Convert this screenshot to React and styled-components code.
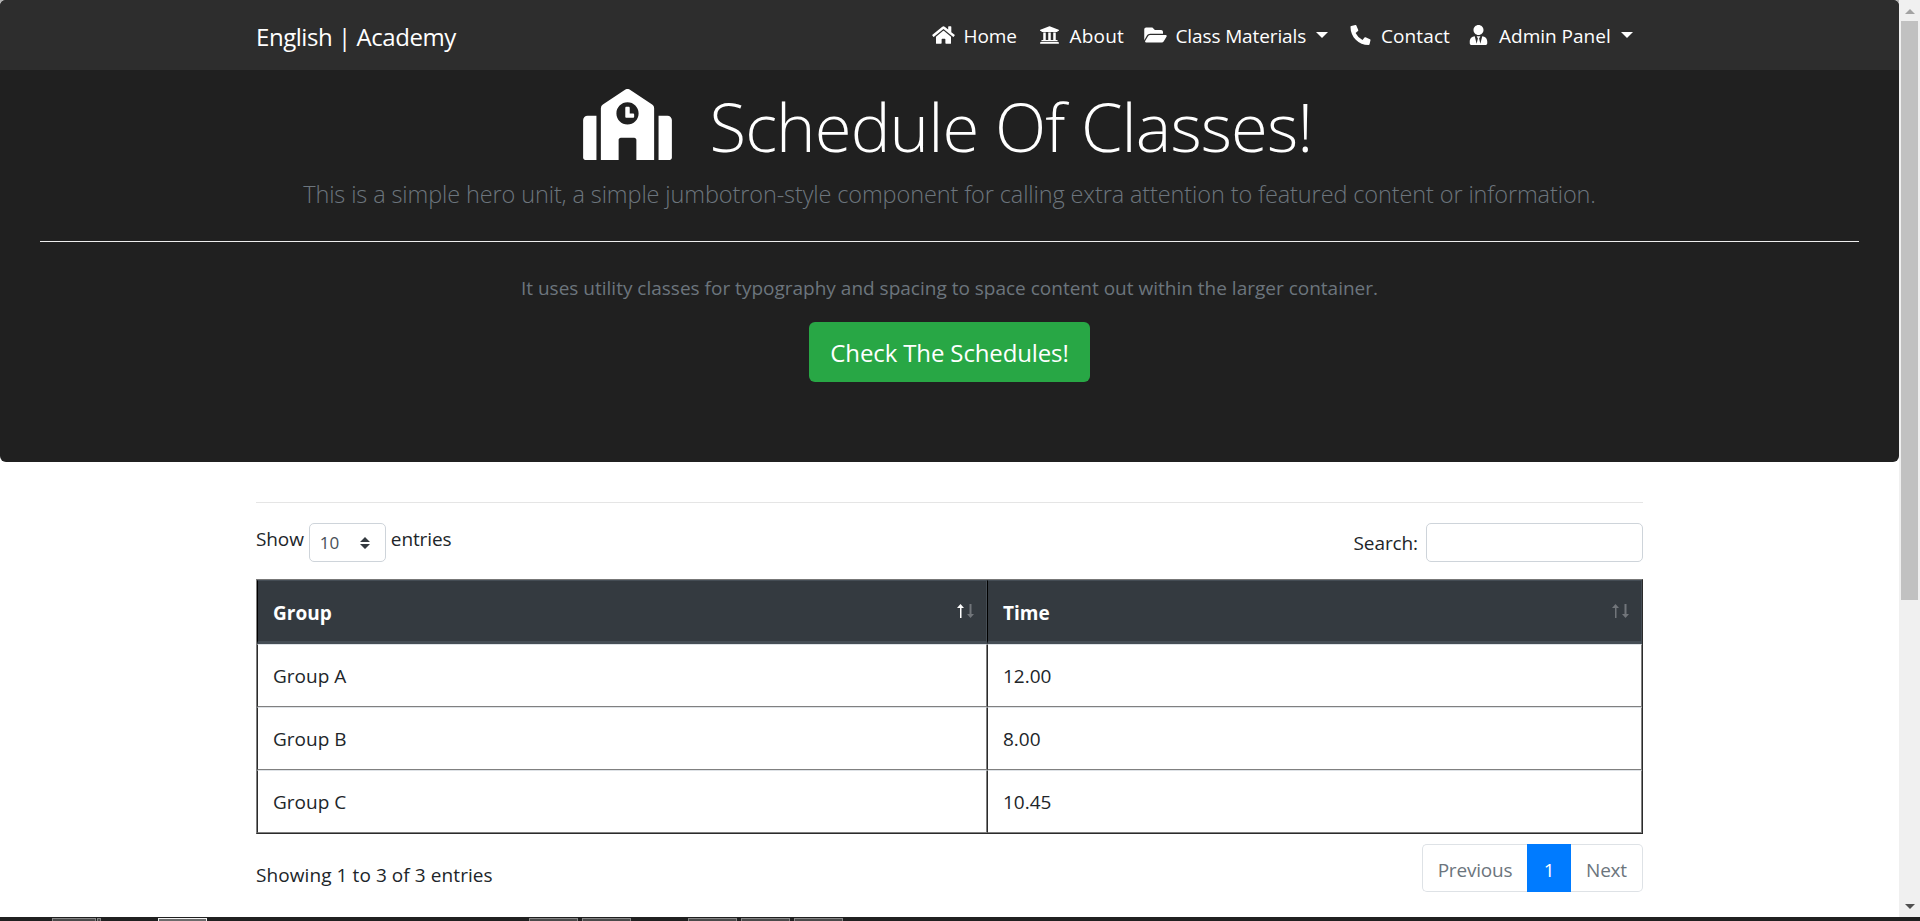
import React from 'react';
import styled, { createGlobalStyle } from 'styled-components';
import {
  FaHome,
  FaUniversity,
  FaFolderOpen,
  FaPhoneAlt,
  FaUserTie,
  FaSchool,
} from 'react-icons/fa';

const GlobalStyle = createGlobalStyle`
  *, *::before, *::after { box-sizing: border-box; }
  body {
    margin: 0;
    overflow: hidden;
    background: #fff;
    color: #212529;
    font-family: "Segoe UI", "Open Sans", "Noto Sans", sans-serif;
    font-size: 19px;
    line-height: 30px;
  }
  h1, p, ul { margin: 0; padding: 0; }
`;

const Screen = styled.div`
  display: grid;
  grid-template: 917px 4px / 1fr 21px;
  height: 921px;
`;

const Page = styled.div`
  background: linear-gradient(#b4b4b4 0 70px, #fff 70px);
`;

const Container = styled.div`
  width: 1387px;
  margin-left: 256px;
`;

/* Header */

const Jumbotron = styled.header`
  height: 462px;
  border-radius: 6px;
  overflow: hidden;
  background: #202020;
`;

const Navbar = styled.nav`
  height: 70px;
  background: #2d2d2d;
`;

const NavInner = styled(Container)`
  display: flex;
  align-items: center;
  justify-content: space-between;
  height: 70px;
`;

const Brand = styled.a`
  padding-top: 3px;
  color: #fff;
  font-size: 24px;
  letter-spacing: -0.45px;
`;

const NavList = styled.ul`
  display: grid;
  grid-template-columns: 106px 106px 205.5px 118px 177px;
  list-style: none;
`;

const NavLink = styled.a`
  display: flex;
  align-items: center;
  gap: 8px;
  color: #fff;
  letter-spacing: ${(p) => p.$tracking || 0}px;
  white-space: nowrap;

  svg { flex: none; width: 25px; height: 20px; }
  span { padding-top: 1px; }
`;

const Caret = styled.i`
  margin-left: 2px;
  border: 6px solid transparent;
  border-top-color: #fff;
  border-bottom: 0;
`;

const Hero = styled.section`
  display: flex;
  flex-direction: column;
  align-items: center;
  padding: 14px 40px 80px;
`;

const HeroTitle = styled.h1`
  display: flex;
  align-items: center;
  gap: 38px;
  height: 84px;
  color: #fff;
  font-size: 67px;
  font-weight: 300;
  line-height: 84px;
  letter-spacing: -0.9px;
  margin-right: 4px;

  svg { width: 89px; height: 71px; margin-bottom: 4px; }
`;

const Lead = styled.p`
  margin-top: 7px;
  color: #6c757d;
  font-size: 23.5px;
  font-weight: 300;
  line-height: 38px;
  letter-spacing: -0.12px;
`;

const HeroRule = styled.hr`
  width: 100%;
  height: 1px;
  margin: 28px 0 31px;
  border: 0;
  background: #eee;
`;

const HeroNote = styled.p`
  color: #6c757d;
`;

const PrimaryButton = styled.button`
  width: 281px;
  height: 60px;
  margin-top: 19px;
  padding: 2px 0 0;
  border: 0;
  border-radius: 6px;
  background: #28a745;
  color: #fff;
  font: inherit;
  font-size: 24px;
  letter-spacing: -0.13px;
`;

/* Schedule table */

const Rule = styled.hr`
  height: 1px;
  margin: 40px 0 20px;
  border: 0;
  background: #e5e5e5;
`;

const Controls = styled.div`
  display: flex;
  justify-content: space-between;
  height: 39px;
`;

const LengthLabel = styled.label`
  display: flex;
  padding-top: 1px;
  letter-spacing: -0.1px;
`;

const LengthSelect = styled.span`
  display: flex;
  align-items: center;
  justify-content: space-between;
  width: 77px;
  height: 39px;
  margin: -1px 5px 0;
  padding: 0 15px 0 10px;
  border: 1px solid #ced4da;
  border-radius: 5px;
  color: #495057;
  font-size: 17px;
`;

const SearchLabel = styled.label`
  display: flex;
  align-items: center;
  gap: 8px;
  letter-spacing: -0.1px;
`;

const SearchInput = styled.input`
  width: 217px;
  height: 39px;
  border: 1px solid #ced4da;
  border-radius: 5px;
  background: #fff;
`;

const Table = styled.table`
  width: 100%;
  height: 255px;
  margin-top: 17px;
  table-layout: fixed;
  border: 1px solid;
  border-color: #777 #2b2b2b #2b2b2b #808080;
  border-collapse: separate;
  border-spacing: 0;
`;

const HeadCell = styled.th`
  width: ${(p) => p.$width}px;
  height: 64px;
  padding: 4px 12px 0 15px;
  border: 1px solid;
  border-width: 1px 1px 3px;
  border-color: #454d55 #454d55 #454d55 #000;
  background: #343a40;
  color: #fff;
  text-align: left;
`;

const HeadContent = styled.div`
  display: flex;
  align-items: center;
  justify-content: space-between;
`;

const SortIcon = styled.svg`
  width: 17px;
  height: 14px;
  margin-top: -5px;
`;

const Cell = styled.td`
  height: 63px;
  padding: 1px 15px 0;
  border: 1px solid;
  border-color: #dee2e6 #808080 #808080 #2b2b2b;
`;

const Footer = styled.div`
  display: flex;
  justify-content: space-between;
  margin-top: 10px;
`;

const Info = styled.div`
  padding-top: 16px;
  letter-spacing: 0.08px;
`;

const Pagination = styled.div`
  display: grid;
  grid-template-columns: 105px 44px 72px;
  height: 48px;
`;

const PageLink = styled.a`
  display: flex;
  align-items: center;
  justify-content: center;
  padding-top: 3px;
  border: 1px solid ${(p) => (p.$active ? '#007bff' : '#dee2e6')};
  border-left-width: ${(p) => (p.$edge === 'end' ? 0 : 1)}px;
  border-right-width: ${(p) => (p.$edge === 'start' ? 0 : 1)}px;
  border-radius: ${(p) =>
    p.$edge === 'start' ? '5px 0 0 5px' : p.$edge === 'end' ? '0 5px 5px 0' : 0};
  background: ${(p) => (p.$active ? '#007bff' : '#fff')};
  color: ${(p) => (p.$active ? '#fff' : '#6c757d')};
  letter-spacing: -0.2px;
`;

/* Window chrome */

const Scrollbar = styled.aside`
  display: flex;
  flex-direction: column;
  align-items: center;
  background: #f0f0f0;
`;

const ScrollArrow = styled.i`
  margin: ${(p) => (p.$down ? 'auto 0 8px' : '9px 0 7px')};
  border: 5px solid transparent;
  ${(p) =>
    p.$down
      ? 'border-top-color: #505050; border-bottom: 0;'
      : 'border-bottom-color: #a3a3a3; border-top: 0;'}
`;

const ScrollThumb = styled.div`
  width: 17px;
  height: 579px;
  margin-right: 1px;
  background: #c1c1c1;
`;

const Taskbar = styled.footer`
  grid-column: 1 / -1;
  display: flex;
  padding: 1px 0 0 52px;
  background: #202020;
`;

const TaskItem = styled.div`
  width: ${(p) => p.$width}px;
  margin-right: ${(p) => p.$after}px;
  border: 1px solid ${(p) => (p.$active ? '#f0f0f0' : '#858585')};
  border-bottom: 0;
  background: ${(p) => (p.$active ? '#6c6c6c' : '#4a4a4a')};
`;

const navItems = [
  { label: 'Home', icon: FaHome, tracking: -0.1 },
  { label: 'About', icon: FaUniversity, tracking: 0.2 },
  { label: 'Class Materials', icon: FaFolderOpen, menu: true, tracking: -0.12 },
  { label: 'Contact', icon: FaPhoneAlt, tracking: 0.1 },
  { label: 'Admin Panel', icon: FaUserTie, menu: true, tracking: 0 },
];

const rows = [
  ['Group A', '12.00'],
  ['Group B', '8.00'],
  ['Group C', '10.45'],
];

const taskItems = [
  { width: 44, after: 1 },
  { width: 4, after: 57 },
  { width: 49, after: 322, active: true },
  { width: 49, after: 4 },
  { width: 49, after: 57 },
  { width: 49, after: 4 },
  { width: 49, after: 4 },
  { width: 49, after: 0 },
];

function SortArrows({ ascending }) {
  return (
    <SortIcon viewBox="0 0 17 14">
      <path
        d="M3 14V4H0L3.5 0 7 4H4.5V14Z"
        fill={ascending ? '#fff' : '#71757a'}
      />
      <path d="M12.5 0V10H10L13.5 14 17 10H14.5V0Z" fill="#71757a" />
    </SortIcon>
  );
}

export default function App() {
  return (
    <Screen>
      <GlobalStyle />
      <Page>
        <Jumbotron>
          <Navbar>
            <NavInner>
              <Brand>English | Academy</Brand>
              <NavList>
                {navItems.map(({ label, icon: Icon, menu, tracking }) => (
                  <li key={label}>
                    <NavLink $tracking={tracking}>
                      <Icon />
                      <span>{label}</span>
                      {menu && <Caret />}
                    </NavLink>
                  </li>
                ))}
              </NavList>
            </NavInner>
          </Navbar>
          <Hero>
            <HeroTitle>
              <FaSchool />
              Schedule Of Classes!
            </HeroTitle>
            <Lead>
              This is a simple hero unit, a simple jumbotron-style component for
              calling extra attention to featured content or information.
            </Lead>
            <HeroRule />
            <HeroNote>
              It uses utility classes for typography and spacing to space
              content out within the larger container.
            </HeroNote>
            <PrimaryButton>Check The Schedules!</PrimaryButton>
          </Hero>
        </Jumbotron>

        <Container as="main">
          <Rule />
          <Controls>
            <LengthLabel>
              Show
              <LengthSelect>
                10
                <svg width="10" height="12" viewBox="0 0 10 12" fill="#343a40">
                  <path d="M5 0L10 5H0ZM5 12L0 7H10Z" />
                </svg>
              </LengthSelect>
              entries
            </LengthLabel>
            <SearchLabel>
              Search:
              <SearchInput />
            </SearchLabel>
          </Controls>

          <Table>
            <thead>
              <tr>
                <HeadCell $width={730}>
                  <HeadContent>
                    Group
                    <SortArrows ascending />
                  </HeadContent>
                </HeadCell>
                <HeadCell $width={655}>
                  <HeadContent>
                    Time
                    <SortArrows />
                  </HeadContent>
                </HeadCell>
              </tr>
            </thead>
            <tbody>
              {rows.map(([group, time]) => (
                <tr key={group}>
                  <Cell>{group}</Cell>
                  <Cell>{time}</Cell>
                </tr>
              ))}
            </tbody>
          </Table>

          <Footer>
            <Info>Showing 1 to 3 of 3 entries</Info>
            <Pagination>
              <PageLink $edge="start">Previous</PageLink>
              <PageLink $active>1</PageLink>
              <PageLink $edge="end">Next</PageLink>
            </Pagination>
          </Footer>
        </Container>
      </Page>

      <Scrollbar>
        <ScrollArrow />
        <ScrollThumb />
        <ScrollArrow $down />
      </Scrollbar>

      <Taskbar>
        {taskItems.map((item, i) => (
          <TaskItem
            key={i}
            $width={item.width}
            $after={item.after}
            $active={item.active}
          />
        ))}
      </Taskbar>
    </Screen>
  );
}
